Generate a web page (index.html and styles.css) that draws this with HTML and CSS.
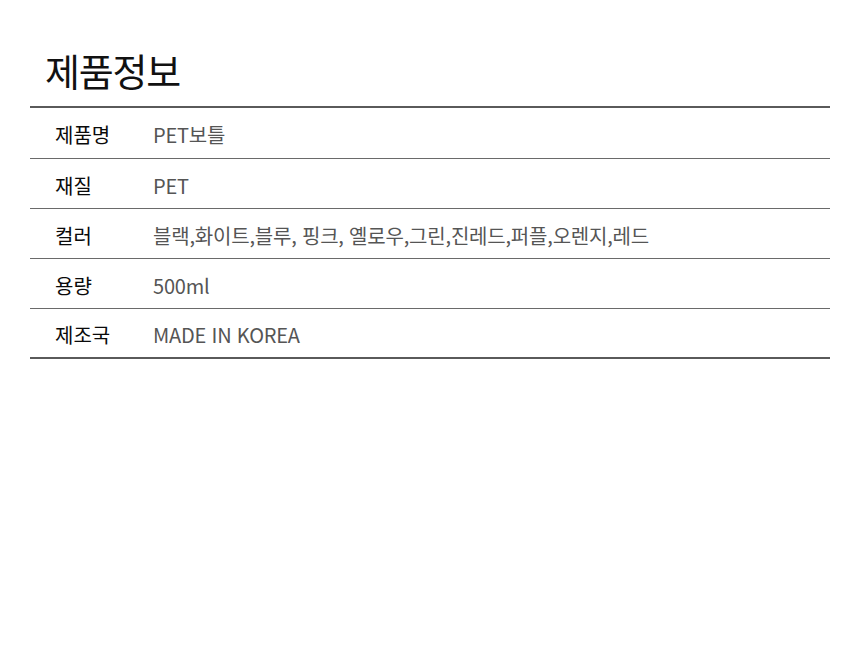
FILE: index.html
```html
<!DOCTYPE html>
<html lang="ko">
<head>
<meta charset="utf-8">
<link rel="stylesheet" href="styles.css">
</head>
<body>
<div class="page">
  <h1 class="title">제품정보</h1>
  <div class="info">
    <div class="row"><div class="label">제품명</div><div class="value">PET보틀</div></div>
    <div class="row"><div class="label">재질</div><div class="value">PET</div></div>
    <div class="row"><div class="label">컬러</div><div class="value">블랙,화이트,블루, 핑크, 옐로우,그린,진레드,퍼플,오렌지,레드</div></div>
    <div class="row"><div class="label">용량</div><div class="value">500ml</div></div>
    <div class="row"><div class="label">제조국</div><div class="value">MADE IN KOREA</div></div>
  </div>
</div>
</body>
</html>
```
FILE: styles.css
```css
html, body {
  margin: 0;
  padding: 0;
  background: #fff;
}
.page {
  width: 800px;
  padding: 45px 30px 0 30px;
  font-family: "Noto Sans CJK KR", "Noto Sans", sans-serif;
}
.title {
  margin: 0 0 11px 15px;
  font-size: 38px;
  line-height: 50px;
  font-weight: 400;
  letter-spacing: -1.2px;
  color: #111;
}
.info {
  border-top: 2px solid #5a5a5a;
  border-bottom: 2px solid #5a5a5a;
}
.row {
  display: flex;
  align-items: center;
  height: 50px;
  padding-top: 3px;
  border-bottom: 1px solid #6a6a6a;
  box-sizing: border-box;
}
.row:first-child {
  height: 51px;
}
.row:last-child {
  border-bottom: none;
  height: 48px;
}
.label {
  width: 98px;
  padding-left: 25px;
  font-size: 20px;
  letter-spacing: 0;
  color: #0a0a0a;
}
.value {
  font-size: 20px;
  letter-spacing: -0.2px;
  color: #555;
}
```
